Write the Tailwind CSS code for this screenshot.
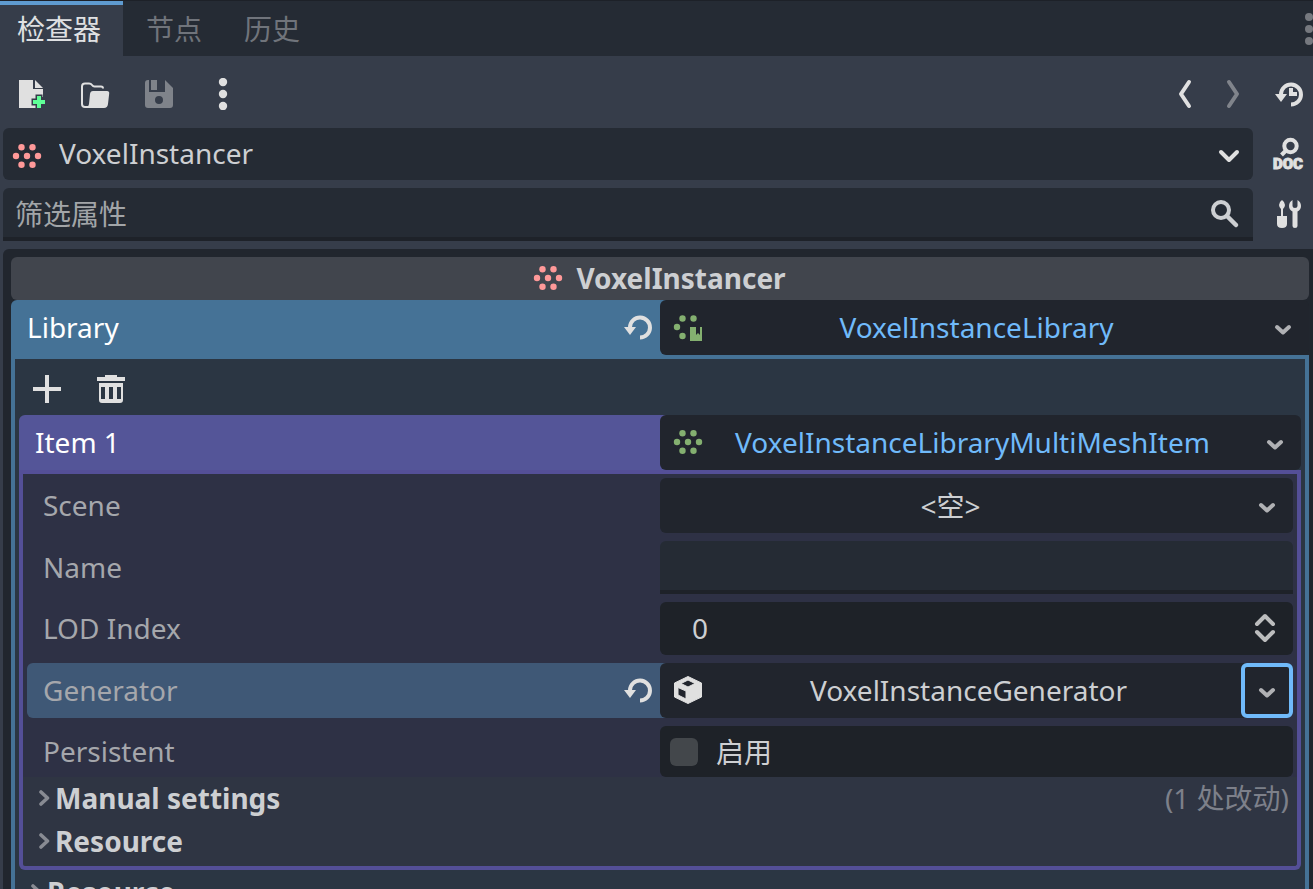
<!DOCTYPE html>
<html lang="zh-CN">
<head>
<meta charset="utf-8">
<meta name="viewport" content="width=device-width, initial-scale=1">
<title>检查器</title>
<script src="https://cdn.jsdelivr.net/npm/@tailwindcss/browser@4"></script>
</head>
<body class="flex h-screen flex-col overflow-hidden bg-[#363d4a] font-['Noto_Sans','Noto_Sans_CJK_SC',sans-serif] text-[28px] leading-10 text-[#cdcfd2]">

<svg class="hidden" aria-hidden="true">
  <symbol id="dots" viewBox="0 0 32 32"><g fill="currentColor"><circle cx="10.5" cy="7.3" r="3.2"/><circle cx="21.5" cy="7.3" r="3.2"/><circle cx="5" cy="16" r="3.2"/><circle cx="16" cy="16" r="3.2"/><circle cx="27" cy="16" r="3.2"/><circle cx="10.5" cy="24.7" r="3.2"/><circle cx="21.5" cy="24.7" r="3.2"/></g></symbol>
  <symbol id="chevron" viewBox="0 0 32 32"><path d="M10 15l6 5.500 6-5.500" fill="none" stroke="currentColor" stroke-width="4" stroke-linecap="round" stroke-linejoin="round"/></symbol>
  <symbol id="fold" viewBox="0 0 12 32"><path d="M2 10l6.500 6L2 22" fill="none" stroke="currentColor" stroke-width="3.600" stroke-linecap="round" stroke-linejoin="round"/></symbol>
  <symbol id="revert" viewBox="0 0 32 32"><path d="M8 16a10 10 0 1 1 10 10.500" fill="none" stroke="currentColor" stroke-width="4"/><path d="M2 16h12l-6 8z" fill="currentColor"/></symbol>
</svg>

<nav class="flex h-14 shrink-0 items-stretch border-t border-[#1d2128] bg-[#252b34]" role="tablist">
  <button role="tab" aria-selected="true" class="border-t-4 border-[#5f9bd0] bg-[#363d4a] pr-[22px] pb-1 pl-[17px] text-[#dfe0e2]">检查器</button>
  <button role="tab" aria-selected="false" class="pr-5 pl-[23px] text-[#70747b]">节点</button>
  <button role="tab" aria-selected="false" class="px-[22px] text-[#70747b]">历史</button>
  <button aria-label="停靠栏选项" class="-mr-2 ml-auto text-[#76797f]">
    <svg class="size-8" viewBox="0 0 32 32" fill="currentColor"><circle cx="20" cy="4" r="4"/><circle cx="20" cy="16" r="4"/><circle cx="20" cy="28" r="4"/></svg>
  </button>
</nav>

<div class="flex h-[72px] shrink-0 items-center gap-8 pt-1 pr-2 pb-0 pl-4 text-[#e0e0e0]">
  <button aria-label="新建资源"><svg class="size-8" viewBox="0 0 32 32"><path d="M3 2h14v9h10v8h-6v11H3z" fill="currentColor"/><path d="M19 2l8 8h-8z" fill="currentColor"/><path d="M21 18h4v4h4v4h-4v4h-4v-4h-4v-4h4z" fill="#5fff97" stroke="#363d4a" stroke-width="3" paint-order="stroke"/></svg></button>
  <button aria-label="打开资源"><svg class="size-8" viewBox="0 0 32 32"><path d="M9 29H5q-3 0-3-3V8.500Q2 5.500 5 5.500h4q2 0 3 1.500t2.500 1.500H21q2 0 2 2" fill="none" stroke="currentColor" stroke-width="2"/><path d="M13 13h14q2.500 0 2.200 2.500L28 26q-.500 4-4 4H4q4.500-.500 5-4l1-10q.400-3 3-3z" fill="currentColor"/></svg></button>
  <button aria-label="保存资源" class="text-[#7f838a]"><svg class="size-8" viewBox="0 0 32 32"><path fill="currentColor" fill-rule="evenodd" d="M4 2h1v12h16V2l8 8v17q0 3-3 3H4q-3 0-3-3V5q0-3 3-3zM15 18a4 4 0 1 0 0 8 4 4 0 0 0 0-8z"/><path fill="currentColor" d="M7 2h6v10H7z"/></svg></button>
  <button aria-label="更多选项"><svg class="size-8" viewBox="0 0 32 32" fill="currentColor"><circle cx="15" cy="4" r="4.200"/><circle cx="15" cy="16" r="4.200"/><circle cx="15" cy="28" r="4.200"/></svg></button>
  <div class="ml-auto flex items-center gap-4">
    <button aria-label="后退"><svg class="size-8" viewBox="0 0 32 32"><path d="M20 4l-8 12 8 12" fill="none" stroke="currentColor" stroke-width="4" stroke-linecap="round" stroke-linejoin="round"/></svg></button>
    <button aria-label="前进" class="text-[#80848b]"><svg class="size-8" viewBox="0 0 32 32"><path d="M12 4l8 12-8 12" fill="none" stroke="currentColor" stroke-width="4" stroke-linecap="round" stroke-linejoin="round"/></svg></button>
    <button aria-label="编辑历史" class="ml-2"><svg class="size-8" viewBox="0 0 32 32"><use href="#revert"/><path d="M16 10h4v4h4v4h-8z" fill="currentColor"/></svg></button>
  </div>
</div>

<div class="flex shrink-0 items-center pl-[3px]">
  <label class="grid h-[52px] flex-1 items-center rounded-md bg-[#252b34]">
    <svg class="col-start-1 row-start-1 ml-2 size-8 translate-y-0.5 text-[#ff9999]"><use href="#dots"/></svg>
    <select aria-label="当前对象" class="col-start-1 row-start-1 h-[52px] w-full appearance-none bg-transparent pb-0.5 pl-[56px] text-[#cdcfd2]"><option>VoxelInstancer</option></select>
    <svg class="pointer-events-none col-start-1 row-start-1 mr-2 size-8 justify-self-end text-[#e0e0e0]" viewBox="0 0 32 32"><path d="M8 14l8 8 8-8" fill="none" stroke="currentColor" stroke-width="4" stroke-linecap="round" stroke-linejoin="round"/></svg>
  </label>
  <button aria-label="打开文档" class="flex w-[60px] justify-center pl-2.5 text-[#e0e0e0]"><svg class="h-9 w-9 overflow-visible" viewBox="0 0 36 36"><circle cx="20.500" cy="10" r="6.200" fill="none" stroke="currentColor" stroke-width="4"/><path d="M16 14.500l-4.500 4.500" stroke="currentColor" stroke-width="4"/><text x="18" y="33" text-anchor="middle" fill="currentColor" stroke="currentColor" stroke-width="1" class="font-['Roboto',sans-serif] text-[15px] font-black">DOC</text></svg></button>
</div>

<div class="mt-2 flex shrink-0 items-center pl-[3px]">
  <label class="flex h-[53px] flex-1 items-center rounded-t-md border-b-4 border-[#1e2229] bg-[#252b34] pr-3 pl-3">
    <input type="text" aria-label="筛选属性" placeholder="筛选属性" class="min-w-0 flex-1 bg-transparent pt-0.5 outline-none placeholder:text-[#a2a5a8]">
    <svg class="size-8 text-[#cdcfd2]" viewBox="0 0 32 32"><circle cx="12" cy="13" r="8" fill="none" stroke="currentColor" stroke-width="4"/><path d="M18 19l9 9" stroke="currentColor" stroke-width="4.500" stroke-linecap="round"/></svg>
  </label>
  <button aria-label="管理对象属性" class="flex w-[60px] justify-center pl-3 text-[#e0e0e0]"><svg class="size-8" viewBox="0 0 32 32" fill="currentColor"><path d="M9 1q3 2 3 5 0 2-2 4v7h4v8q0 4-5 4t-5-4v-8h4v-7Q6 8 6 6q0-3 3-5z"/><path d="M19.500 1v6q0 2 2.500 2t2.500-2V1Q28 3 28 7q0 3.500-3.500 5.500V27q0 2-2.500 2t-2.500-2V12.500Q16 10.500 16 7q0-4 3.500-6z"/></svg></button>
</div>

<main class="mt-2 ml-[3px] min-h-0 flex-1 overflow-hidden rounded-tl-md bg-[#21262e] pt-2 pr-1 pl-2">
  <h1 class="flex h-[43px] items-center justify-center gap-3 rounded-md bg-[#41454d] pr-0.5 pb-0.5 font-bold"><svg class="size-8 text-[#ff9999]"><use href="#dots"/></svg>VoxelInstancer</h1>

  <section>
    <div class="grid grid-cols-2 rounded-tl-md border-b-4 border-[#457296] bg-[linear-gradient(90deg,#457296_52%,#21262e_52%)]">
      <div class="flex items-center justify-between pr-1.5 pb-0.5 pl-4 text-white"><span>Library</span><button aria-label="还原 Library" class="text-[#e0e0e0]"><svg class="size-8"><use href="#revert"/></svg></button></div>
      <div class="flex h-[55px] rounded-md bg-[#21252d]">
        <button class="flex flex-1 items-center gap-2 pr-4 pb-0.5 pl-3 text-[#70bafa]"><svg class="size-8 text-[#84b070]" viewBox="0 0 32 32" fill="currentColor"><circle cx="10.500" cy="7.500" r="3.200"/><circle cx="21.500" cy="7.500" r="3.200"/><circle cx="5" cy="16" r="3.200"/><circle cx="10.500" cy="25" r="3.200"/><path d="M18 16h6v8l2-2 2 2v-8h2v14H18z"/></svg><span class="flex-1">VoxelInstanceLibrary</span></button>
        <button aria-label="Library 菜单" class="flex w-[52px] items-center justify-center text-[#b0b1b4]"><svg class="size-8"><use href="#chevron"/></svg></button>
      </div>
    </div>

    <div class="border-x-4 border-[#457296] bg-[#2b3643] px-1 pb-20">
      <div class="flex h-14 items-center gap-8 pt-1 pl-3 text-[#e0e0e0]">
        <button aria-label="添加"><svg class="size-8" viewBox="0 0 32 32"><path d="M14 2h4v12h12v4H18v12h-4V18H2v-4h12z" fill="currentColor"/></svg></button>
        <button aria-label="删除"><svg class="size-8" viewBox="0 0 32 32"><path fill="currentColor" fill-rule="evenodd" d="M10 2h12v2h8v4H2V4h8zM4 10h24v17q0 3-3 3H7q-3 0-3-3zM6 14v12h4V14zM14 14v12h4V14zM22 14v12h4V14z"/></svg></button>
      </div>

      <section>
        <div class="grid grid-cols-2 rounded-tl-md border-b-4 border-[#544f97] bg-[linear-gradient(90deg,#545598_52%,#2b3643_52%)]">
          <div class="flex items-center pb-0.5 pl-4 text-white">Item 1</div>
          <div class="flex h-[55px] rounded-md bg-[#21252d]">
            <button class="flex flex-1 items-center gap-2 pr-4 pb-0.5 pl-3 text-[#70bafa]"><svg class="size-8 text-[#84b070]"><use href="#dots"/></svg><span class="flex-1">VoxelInstanceLibraryMultiMeshItem</span></button>
            <button aria-label="Item 1 菜单" class="flex w-[52px] items-center justify-center text-[#b0b1b4]"><svg class="size-8"><use href="#chevron"/></svg></button>
          </div>
        </div>

        <div class="rounded-b-md border-x-4 border-b-4 border-[#544f97] bg-[#2f3543]">
          <div class="grid gap-2 bg-[#2e3145] px-1 pt-1 text-[#a5a7ac]">
            <div class="grid grid-cols-2">
              <div class="flex items-center pb-0.5 pl-4">Scene</div>
              <div class="flex h-[55px] rounded-md bg-[#21252d] text-[#cdcfd2]">
                <button class="flex-1">&lt;空&gt;</button>
                <button aria-label="Scene 菜单" class="flex w-[52px] items-center justify-center text-[#b0b1b4]"><svg class="size-8"><use href="#chevron"/></svg></button>
              </div>
            </div>
            <div class="grid grid-cols-2">
              <label for="name" class="flex items-center pb-0.5 pl-4">Name</label>
              <input id="name" type="text" class="h-[53px] w-full rounded-t-md border-b-4 border-[#1e2229] bg-[#252b34] px-3 text-[#cdcfd2] outline-none">
            </div>
            <div class="grid grid-cols-2">
              <label for="lod" class="flex items-center pb-0.5 pl-4">LOD Index</label>
              <div class="flex h-[53px] items-center rounded-md bg-[#1e2228] pr-3 pb-0.5 pl-8">
                <input id="lod" type="text" inputmode="numeric" value="0" class="min-w-0 flex-1 bg-transparent text-[#cdcfd2] outline-none">
                <button aria-label="调整 LOD Index" class="text-[#bcbdbe]"><svg class="size-8" viewBox="0 0 32 32"><path d="M8 12l8-8 8 8M8 20l8 8 8-8" fill="none" stroke="currentColor" stroke-width="4" stroke-linecap="round" stroke-linejoin="round"/></svg></button>
              </div>
            </div>
            <div class="grid grid-cols-2 rounded-md bg-[linear-gradient(90deg,#3f5876_52%,#2e3145_52%)]">
              <div class="flex items-center justify-between pr-1.5 pb-0.5 pl-4"><span>Generator</span><button aria-label="还原 Generator" class="text-[#e0e0e0]"><svg class="size-8"><use href="#revert"/></svg></button></div>
              <div class="flex h-[55px] rounded-md bg-[#21252d] text-[#cdcfd2]">
                <button class="flex flex-1 items-center gap-2 pr-4 pb-0.5 pl-3"><svg class="size-8 text-[#e0e0e0]" viewBox="0 0 32 32"><path fill="currentColor" fill-rule="evenodd" stroke="currentColor" stroke-linejoin="round" d="M16 2.500l13.500 6.500v14L16 29.500 2.500 23V9zM16 6L9 9.500l7 3.500 7-3.500zM6 13.500v7.500l8 4V17z"/></svg><span class="flex-1">VoxelInstanceGenerator</span></button>
                <button aria-label="Generator 菜单" class="flex w-[52px] items-center justify-center rounded-md border-4 border-[#70bafa] text-[#b0b1b4]"><svg class="size-8"><use href="#chevron"/></svg></button>
              </div>
            </div>
            <div class="grid grid-cols-2">
              <div class="flex items-center pb-0.5 pl-4">Persistent</div>
              <label class="flex h-[51px] items-center gap-[18px] rounded-md bg-[#1e2228] pl-2.5 text-[#cdcfd2]"><input type="checkbox" class="size-7 appearance-none rounded-md bg-[#43474b] checked:bg-[#70bafa]">启用</label>
            </div>
          </div>
          <div class="px-1 pb-[3px]">
            <div class="flex h-[43px] items-center justify-between pb-0.5 pl-3">
              <button class="flex items-center gap-1 font-bold"><svg class="h-8 w-3 text-[#888b93]"><use href="#fold"/></svg>Manual settings</button>
              <span class="pr-1 text-[#7d808a]">(1 处改动)</span>
            </div>
            <div class="flex h-[43px] items-center pb-0.5 pl-3">
              <button class="flex items-center gap-1 font-bold"><svg class="h-8 w-3 text-[#888b93]"><use href="#fold"/></svg>Resource</button>
            </div>
          </div>
        </div>
      </section>

      <div class="flex h-[43px] items-center pl-3">
        <button class="flex items-center gap-1 font-bold"><svg class="h-8 w-3 text-[#888b93]"><use href="#fold"/></svg>Resource</button>
      </div>
    </div>
  </section>
</main>
</body>
</html>
